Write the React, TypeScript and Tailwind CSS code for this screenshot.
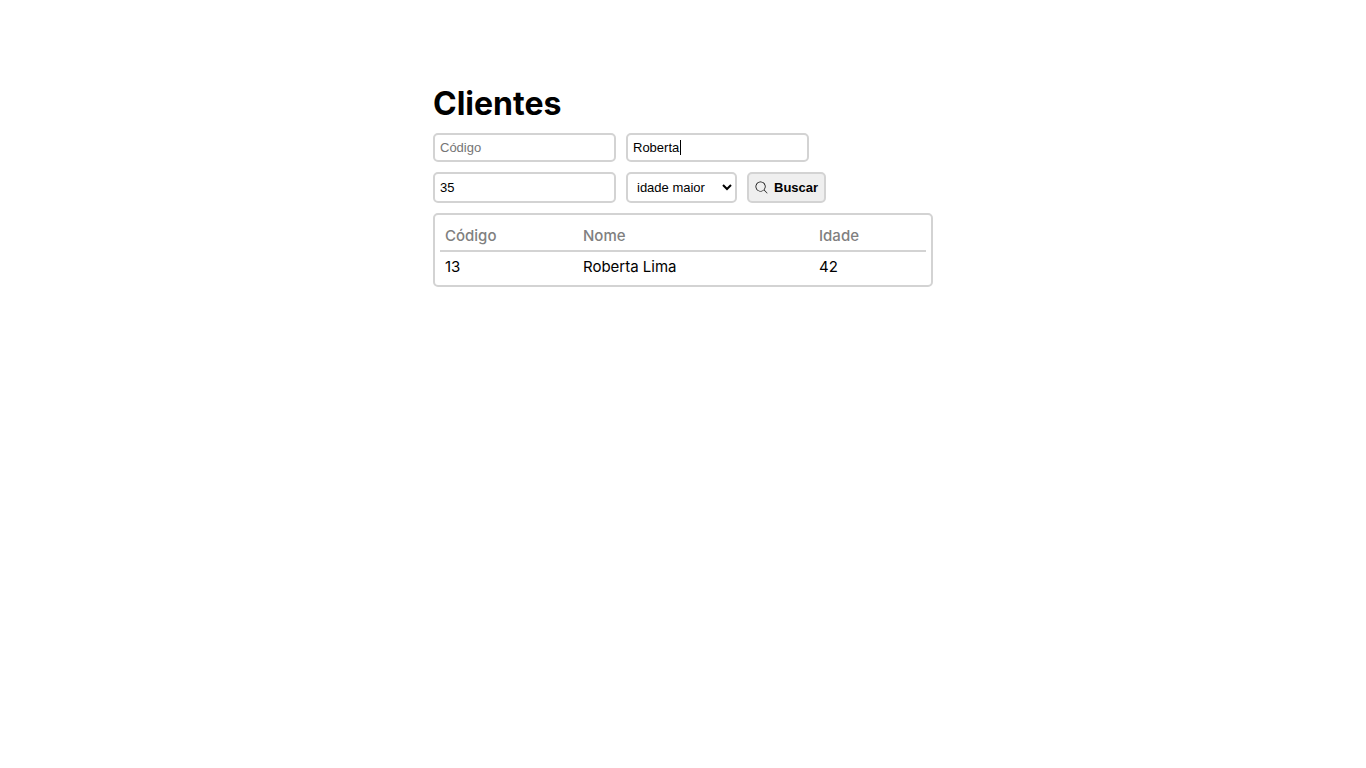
import { useState } from "react";
import { PiMagnifyingGlassLight } from "react-icons/pi";

const clients = [{ code: 13, name: "Roberta Lima", age: 42 }];

const field =
  "w-[183px] rounded-[5px] border-2 border-[#d3d3d3] bg-white px-[5px] outline-none placeholder:text-[#757575]";

export default function App() {
  const [code, setCode] = useState("");
  const [name, setName] = useState("Roberta");
  const [nameTouched, setNameTouched] = useState(false);
  const [age, setAge] = useState("35");
  const [mode, setMode] = useState("maior");

  return (
    <main className="mx-auto max-w-[500px] pt-20 font-['Inter',sans-serif] text-black">
      <h1 className="mb-[5px] text-[32px] leading-[48px] font-bold">Clientes</h1>
      <form
        className="flex flex-col gap-[10px] font-['Liberation_Sans',sans-serif] text-[13px]"
        onSubmit={(e) => e.preventDefault()}
      >
        <div className="flex gap-[10px]">
          <input
            aria-label="Código"
            placeholder="Código"
            value={code}
            onChange={(e) => setCode(e.target.value)}
            className={`${field} h-[29px]`}
          />
          <div className="relative">
            <input
              aria-label="Nome"
              placeholder="Nome"
              value={name}
              onFocus={() => setNameTouched(true)}
              onChange={(e) => setName(e.target.value)}
              className={`${field} h-[29px]`}
            />
            {!nameTouched && (
              <span
                aria-hidden="true"
                className="pointer-events-none absolute top-[7px] left-[54px] h-[15px] w-px bg-black"
              />
            )}
          </div>
        </div>
        <div className="flex gap-[10px]">
          <input
            aria-label="Idade"
            placeholder="Idade"
            value={age}
            onChange={(e) => setAge(e.target.value)}
            className={`${field} h-[31px]`}
          />
          <select
            aria-label="Filtro de idade"
            value={mode}
            onChange={(e) => setMode(e.target.value)}
            className="h-[31px] w-[111px] rounded-[5px] border-2 border-[#d3d3d3] bg-white pr-[3px] pl-[5px]"
          >
            <option value="maior">idade maior</option>
            <option value="menor">idade menor</option>
          </select>
          <button
            type="submit"
            className="flex h-[31px] w-[79px] items-center gap-[5px] rounded-[5px] border-2 border-[#d3d3d3] bg-[#efefef] px-[5px] font-bold"
          >
            <PiMagnifyingGlassLight size={15} />
            Buscar
          </button>
        </div>
      </form>
      <div className="mt-[10px] rounded-[5px] border-2 border-[#d3d3d3] p-[5px]">
        <table className="w-full table-fixed border-collapse text-left text-[15px] leading-[20px]">
          <colgroup>
            <col className="w-[138px]" />
            <col className="w-[236px]" />
            <col />
          </colgroup>
          <thead>
            <tr className="border-b-2 border-[#d3d3d3] text-[#808080]">
              <th className="px-[5px] pt-[6px] pb-[4px] font-medium">Código</th>
              <th className="px-[5px] pt-[6px] pb-[4px] font-medium">Nome</th>
              <th className="px-[5px] pt-[6px] pb-[4px] font-medium">Idade</th>
            </tr>
          </thead>
          <tbody>
            {clients.map((client) => (
              <tr key={client.code}>
                <td className="px-[5px] pt-[5px] pb-[3px]">{client.code}</td>
                <td className="px-[5px] pt-[5px] pb-[3px]">{client.name}</td>
                <td className="px-[5px] pt-[5px] pb-[3px]">{client.age}</td>
              </tr>
            ))}
          </tbody>
        </table>
      </div>
    </main>
  );
}
